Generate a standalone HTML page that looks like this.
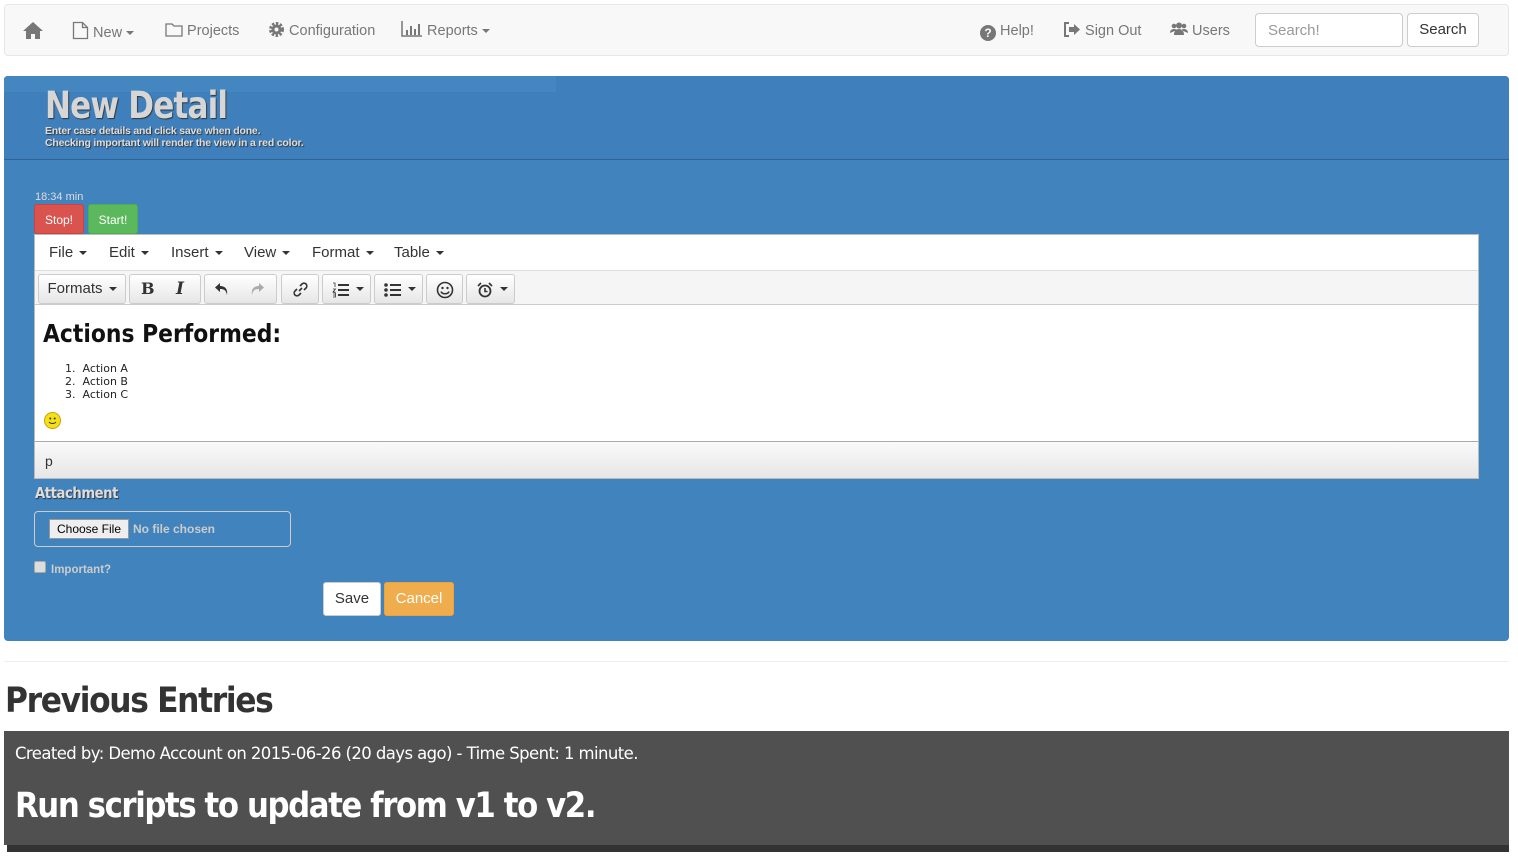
<!DOCTYPE html>
<html><head><style>
*{box-sizing:border-box}
body{margin:0;width:1518px;height:863px;overflow:hidden;background:#fff;font-family:"Liberation Sans",sans-serif;font-size:14px;color:#333;position:relative}
.abs{position:absolute}
.sx{transform-origin:0 0}
.nav{left:4px;top:4px;width:1505px;height:52px;background:#f8f8f8;border:1px solid #e7e7e7;border-radius:4px}
.ni{position:absolute;top:16px;color:#777;font-size:14.5px;line-height:20px;white-space:nowrap}
.car{display:inline-block;border-top:4px solid #777;border-left:4px solid transparent;border-right:4px solid transparent;vertical-align:middle;margin-left:4px}
.panel{left:4px;top:76px;width:1505px;height:565px;background:#4183bd;border-radius:4px 4px 4px 4px}
.hd{left:4px;top:76px;width:1505px;height:84px;background:#3f80bc;border-bottom:1px solid #2e6394;border-radius:4px 4px 0 0}
.ed{left:34px;top:234px;width:1445px;height:245px;background:#fff;border:1px solid #bbb}
.menu span{position:absolute;top:9px;font-size:15px;color:#333}
.mc{display:inline-block;border-top:4px solid #333;border-left:4px solid transparent;border-right:4px solid transparent;vertical-align:middle;margin-left:6px}
.tb{position:absolute;top:35px;left:0;right:0;height:35px;background:#f5f5f5;border-top:1px solid #ddd;border-bottom:1px solid #ccc}
.bt{position:absolute;top:3px;height:30px;border:1px solid #ccc;border-radius:3px;background:linear-gradient(#fff,#e6e6e6);font-size:15px;color:#333;text-align:center;line-height:28px}
.btn{position:absolute;border-radius:3px;font-size:15px;text-align:center}
</style></head><body>
<div class="abs nav">
<svg class="abs" style="left:17px;top:16px" width="22" height="18" viewBox="0 0 22 18"><path d="M11 1L1 10h3v8h5v-5h4v5h5v-8h3z" fill="#777"/></svg>
<div class="ni" style="left:67px"><svg width="17" height="19" viewBox="0 0 17 19" style="vertical-align:-3px"><path d="M1.5 1.5h9l5 5v11h-14z M10.5 1.5v5h5" fill="none" stroke="#777" stroke-width="1.3"/></svg> New<span class="car"></span></div>
<div class="ni" style="left:160px"><svg width="18" height="15" viewBox="0 0 18 15" style="vertical-align:-2px"><path d="M1 2h6l2 2h8v10H1z" fill="none" stroke="#777" stroke-width="1.3"/></svg> Projects</div>
<div class="ni" style="left:263px"><svg width="17" height="17" viewBox="0 0 17 17" style="vertical-align:-3px"><circle cx="8.5" cy="8.5" r="5.5" fill="none" stroke="#777" stroke-width="4" stroke-dasharray="2.2 1.4"/><circle cx="8.5" cy="8.5" r="5" fill="#777"/><circle cx="8.5" cy="8.5" r="2" fill="#f8f8f8"/></svg> Configuration</div>
<div class="ni" style="left:396px"><svg width="22" height="16" viewBox="0 0 22 16" style="vertical-align:-2px"><path d="M1 0v15h20" stroke="#777" stroke-width="1.5" fill="none"/><path d="M5 9h2v5H5zM9 5h2v9H9zM13 8h2v6h-2zM17 3h2v11h-2z" fill="#777"/></svg> Reports<span class="car"></span></div>
<div class="ni" style="left:975px"><span style="display:inline-block;width:16px;height:16px;border-radius:50%;background:#777;color:#f8f8f8;font-size:12px;font-weight:bold;text-align:center;line-height:16px;vertical-align:-2px">?</span> Help!</div>
<div class="ni" style="left:1058px"><svg width="18" height="15" viewBox="0 0 18 15" style="vertical-align:-2px"><path d="M6 1H2v13h4" fill="none" stroke="#777" stroke-width="2"/><path d="M6 5h5V2l6 5.5-6 5.5v-3H6z" fill="#777"/></svg> Sign Out</div>
<div class="ni" style="left:1165px"><svg width="18" height="14" viewBox="0 0 18 14" style="vertical-align:-1px"><circle cx="4" cy="4" r="2.3" fill="#777"/><circle cx="14" cy="4" r="2.3" fill="#777"/><circle cx="9" cy="3.5" r="3" fill="#777"/><path d="M0 11c0-3 2-4 4-4s3 1 3 1M18 11c0-3-2-4-4-4s-3 1-3 1M4 13c0-4 2-6 5-6s5 2 5 6z" fill="#777"/></svg> Users</div>
<div class="abs" style="left:1250px;top:8px;width:148px;height:34px;border:1px solid #ccc;border-radius:4px;background:#fff;color:#999;font-size:15px;padding:8px 12px">Search!</div>
<div class="abs" style="left:1402px;top:8px;width:72px;height:34px;border:1px solid #ccc;border-radius:4px;background:#fff;color:#333;font-size:15px;text-align:center;line-height:32px">Search</div>
</div>
<div class="abs panel"></div>
<div class="abs hd"><div class="abs" style="left:0;top:0;width:552px;height:16px;background:#4386c0;border-radius:4px 0 0 0"></div></div>
<div class="abs sx" style="left:45px;top:84px;font-size:37px;font-weight:bold;color:#d6d6d6;font-family:'DejaVu Sans',sans-serif;letter-spacing:-1px;text-shadow:1px 1px 1px #333;transform:scaleX(0.84)">New Detail</div>
<div class="abs" style="left:45px;top:125px;font-size:10.5px;font-weight:bold;color:#ddd;line-height:12px;letter-spacing:-0.2px;text-shadow:1px 1px 1px #333">Enter case details and click save when done.<br>Checking important will render the view in a red color.</div>
<div class="abs" style="left:35px;top:191px;font-size:11px;color:#ddd">18:34 min</div>
<div class="btn" style="left:34px;top:204px;width:50px;height:30px;background:#d9534f;color:#fff;font-size:12px;line-height:30px;border:1px solid #d43f3a">Stop!</div>
<div class="btn" style="left:88px;top:204px;width:50px;height:30px;background:#5cb85c;color:#fff;font-size:12px;line-height:30px;border:1px solid #4cae4c">Start!</div>
<div class="abs ed">
<div class="menu"><span style="left:14px">File<i class="mc"></i></span><span style="left:74px">Edit<i class="mc"></i></span><span style="left:136px">Insert<i class="mc"></i></span><span style="left:209px">View<i class="mc"></i></span><span style="left:277px">Format<i class="mc"></i></span><span style="left:359px">Table<i class="mc"></i></span></div>
<div class="tb">
<div class="bt" style="left:3px;width:88px">Formats<i class="mc"></i></div>
<div class="bt" style="left:94px;width:72px;text-align:left"><b style="position:absolute;left:11px;font-family:'DejaVu Serif',serif;font-size:16px">B</b><i style="position:absolute;left:46px;font-family:'DejaVu Serif',serif;font-size:17px;font-weight:bold">I</i></div>
<div class="bt" style="left:169px;width:73px"><svg class="abs" style="left:9px;top:7px" width="16" height="14" viewBox="0 0 16 14"><path d="M6 1L1 5.5 6 10V7c4 0 6 1 7 6 1-6-2-9-7-9z" fill="#333"/></svg><svg class="abs" style="left:44px;top:7px" width="16" height="14" viewBox="0 0 16 14"><path d="M10 1l5 4.5-5 4.5V7c-4 0-6 1-7 6-1-6 2-9 7-9z" fill="#aaa"/></svg></div>
<div class="bt" style="left:246px;width:38px"><svg class="abs" style="left:10px;top:6px" width="17" height="17" viewBox="0 0 17 17"><path d="M7 10l3-3M5 8l-2 2a2.5 2.5 0 0 0 4 4l2-2M12 9l2-2a2.5 2.5 0 0 0-4-4L8 5" fill="none" stroke="#333" stroke-width="1.6"/></svg></div>
<div class="bt" style="left:287px;width:49px"><svg class="abs" style="left:9px;top:7px" width="18" height="16" viewBox="0 0 18 16"><path d="M6 3h11M6 8h11M6 13h11" stroke="#333" stroke-width="2"/><path d="M1 1h2v4M1 7h2.5l-2.5 3h2.5M1 11h2.5v4H1M1 13h2.5" stroke="#333" stroke-width=".8" fill="none"/></svg><i class="mc" style="position:absolute;left:33px;top:12px;margin:0"></i></div>
<div class="bt" style="left:339px;width:49px"><svg class="abs" style="left:9px;top:7px" width="18" height="16" viewBox="0 0 18 16"><circle cx="2" cy="3" r="1.8" fill="#333"/><circle cx="2" cy="8" r="1.8" fill="#333"/><circle cx="2" cy="13" r="1.8" fill="#333"/><path d="M6 3h11M6 8h11M6 13h11" stroke="#333" stroke-width="2"/></svg><i class="mc" style="position:absolute;left:33px;top:12px;margin:0"></i></div>
<div class="bt" style="left:391px;width:37px"><svg class="abs" style="left:9px;top:6px" width="18" height="18" viewBox="0 0 18 18"><circle cx="9" cy="9" r="7.5" fill="none" stroke="#333" stroke-width="1.6"/><circle cx="6.5" cy="7" r="1.2" fill="#333"/><circle cx="11.5" cy="7" r="1.2" fill="#333"/><path d="M5 10.5c1 3 7 3 8 0" fill="none" stroke="#333" stroke-width="1.5"/></svg></div>
<div class="bt" style="left:431px;width:49px"><svg class="abs" style="left:10px;top:7px" width="16" height="16" viewBox="0 0 16 16"><circle cx="8" cy="9" r="5.5" fill="none" stroke="#333" stroke-width="1.8"/><path d="M8 6v3.5h2.5M1 4l3-3M15 4l-3-3" stroke="#333" stroke-width="1.6" fill="none"/></svg><i class="mc" style="position:absolute;left:33px;top:12px;margin:0"></i></div>
</div>
<div class="abs sx" style="left:8px;top:84px;font-size:25px;font-weight:bold;color:#111;font-family:'DejaVu Sans',sans-serif;transform:scaleX(0.875)">Actions Performed:</div>
<div class="abs" style="left:30px;top:127px;font-size:11px;line-height:13px;color:#222;font-family:'DejaVu Sans',sans-serif">1.&nbsp;&nbsp;Action A<br>2.&nbsp;&nbsp;Action B<br>3.&nbsp;&nbsp;Action C</div>
<div class="abs" style="left:9px;top:177px;width:17px;height:17px;border-radius:50%;background:#f5e01a;border:1px solid #c9a500"><svg class="abs" style="left:0;top:0" width="15" height="15" viewBox="0 0 15 15"><circle cx="5.3" cy="5.5" r="1" fill="#333"/><circle cx="9.7" cy="5.5" r="1" fill="#333"/><path d="M4 9c1.5 2 5.5 2 7 0" stroke="#333" fill="none"/></svg></div>
<div class="abs" style="left:0;top:206px;width:1443px;height:37px;border-top:1px solid #aaa;background:linear-gradient(#fafafa,#e6e6e6);font-size:14px;padding:11px 10px;color:#333">p</div>
</div>
<div class="abs" style="left:35px;top:484px;font-size:15px;font-weight:bold;color:#ddd;font-family:'DejaVu Sans',sans-serif;letter-spacing:-0.5px;text-shadow:1px 1px 1px #333;transform:scaleX(0.88);transform-origin:0 0">Attachment</div>
<div class="abs" style="left:34px;top:511px;width:257px;height:36px;border:1px solid #ccc;border-radius:4px"></div>
<div class="abs" style="left:49px;top:519px;width:80px;height:20px;background:#eee;border:1px solid #999;font-size:12px;text-align:center;line-height:18px;color:#000">Choose File</div>
<div class="abs" style="left:133px;top:522px;font-size:12px;font-weight:bold;color:#ccc">No file chosen</div>
<div class="abs" style="left:34px;top:561px;width:12px;height:12px;background:#ddd;border:1px solid #aaa;border-radius:2px"></div>
<div class="abs" style="left:51px;top:564px;font-size:11.5px;font-weight:bold;color:#ccc">Important?</div>
<div class="btn" style="left:323px;top:582px;width:58px;height:34px;background:#fff;border:1px solid #ccc;line-height:32px;color:#333">Save</div>
<div class="btn" style="left:384px;top:582px;width:70px;height:34px;background:#f0ad4e;border:1px solid #eea236;line-height:32px;color:#fff">Cancel</div>
<div class="abs" style="left:4px;top:661px;width:1505px;height:1px;background:#eee"></div>
<div class="abs sx" style="left:5px;top:681px;font-size:35px;font-weight:bold;color:#333;font-family:'DejaVu Sans',sans-serif;letter-spacing:-1.5px;transform:scaleX(0.895)">Previous Entries</div>
<div class="abs" style="left:7px;top:736px;width:1502px;height:116px;background:#333"></div>
<div class="abs" style="left:4px;top:731px;width:1505px;height:114px;background:#505050"></div>
<div class="abs sx" style="left:15px;top:744px;font-size:17px;color:#fff;font-family:'DejaVu Sans',sans-serif;letter-spacing:-0.6px;transform:scaleX(0.97)">Created by: Demo Account on 2015-06-26 (20 days ago) - Time Spent: 1 minute.</div>
<div class="abs sx" style="left:15px;top:786px;font-size:35px;font-weight:bold;color:#fff;font-family:'DejaVu Sans',sans-serif;letter-spacing:-1.6px;transform:scaleX(0.88)">Run scripts to update from v1 to v2.</div>
</body></html>
